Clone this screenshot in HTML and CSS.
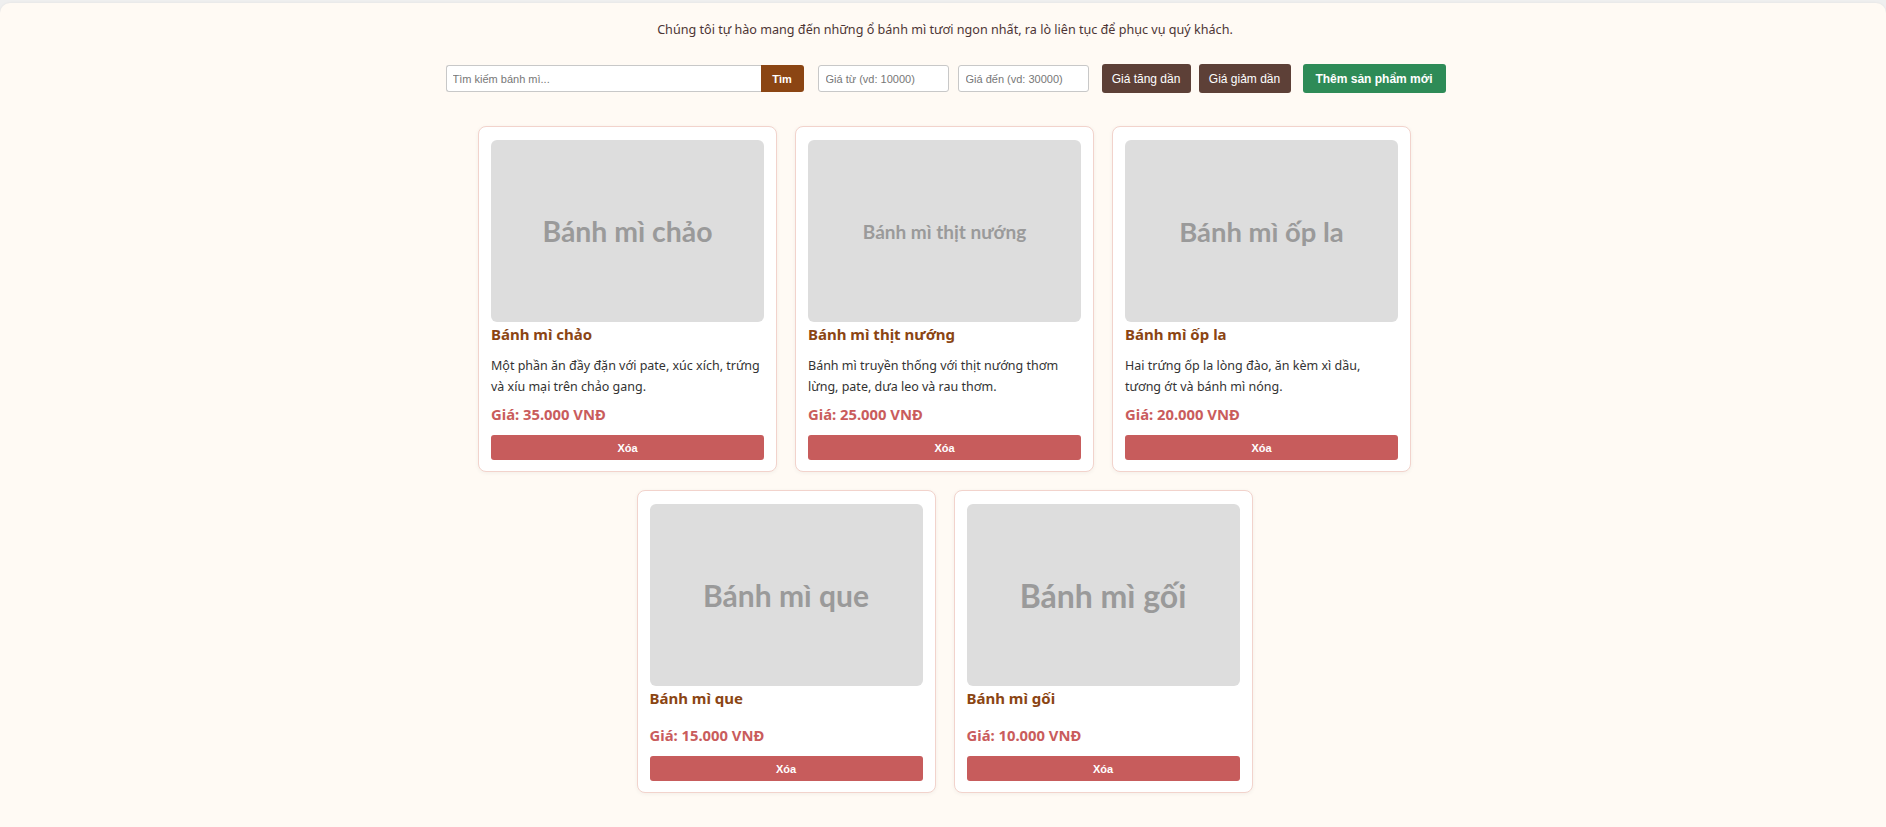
FILE: index.html
```html
<!DOCTYPE html>
<html lang="vi">
<head>
<meta charset="utf-8">
<title>Bánh mì</title>
<link rel="stylesheet" href="styles.css">
</head>
<body>
<div class="page">
  <p class="intro">Chúng tôi tự hào mang đến những ổ bánh mì tươi ngon nhất, ra lò liên tục để phục vụ quý khách.</p>
  <div class="toolbar">
    <div class="search">
      <input class="search-input" type="text" placeholder="Tìm kiếm bánh mì...">
      <button class="btn btn-search">Tìm</button>
    </div>
    <input class="price-input price-from" type="text" placeholder="Giá từ (vd: 10000)">
    <input class="price-input price-to" type="text" placeholder="Giá đến (vd: 30000)">
    <button class="btn btn-sort btn-asc">Giá tăng dần</button>
    <button class="btn btn-sort btn-desc">Giá giảm dần</button>
    <button class="btn btn-add">Thêm sản phẩm mới</button>
  </div>
  <div class="grid">
    <div class="card">
      <div class="thumb"><span class="t-chao">Bánh mì chảo</span></div>
      <h3 class="name">Bánh mì chảo</h3>
      <p class="desc">Một phần ăn đầy đặn với pate, xúc xích, trứng và xíu mại trên chảo gang.</p>
      <p class="price">Giá: 35.000 VNĐ</p>
      <button class="btn btn-del">Xóa</button>
    </div>
    <div class="card">
      <div class="thumb"><span class="t-nuong">Bánh mì thịt nướng</span></div>
      <h3 class="name">Bánh mì thịt nướng</h3>
      <p class="desc">Bánh mì truyền thống với thịt nướng thơm lừng, pate, dưa leo và rau thơm.</p>
      <p class="price">Giá: 25.000 VNĐ</p>
      <button class="btn btn-del">Xóa</button>
    </div>
    <div class="card">
      <div class="thumb"><span class="t-opla">Bánh mì ốp la</span></div>
      <h3 class="name">Bánh mì ốp la</h3>
      <p class="desc">Hai trứng ốp la lòng đào, ăn kèm xì dầu, tương ớt và bánh mì nóng.</p>
      <p class="price">Giá: 20.000 VNĐ</p>
      <button class="btn btn-del">Xóa</button>
    </div>
    <div class="card">
      <div class="thumb"><span class="t-que">Bánh mì que</span></div>
      <h3 class="name">Bánh mì que</h3>
      <p class="desc"></p>
      <p class="price">Giá: 15.000 VNĐ</p>
      <button class="btn btn-del">Xóa</button>
    </div>
    <div class="card">
      <div class="thumb"><span class="t-goi">Bánh mì gối</span></div>
      <h3 class="name">Bánh mì gối</h3>
      <p class="desc"></p>
      <p class="price">Giá: 10.000 VNĐ</p>
      <button class="btn btn-del">Xóa</button>
    </div>
  </div>
</div>
</body>
</html>
```

FILE: styles.css
```css
* { box-sizing: border-box; }

html, body {
  margin: 0;
  padding: 0;
}

body {
  background: #efefef;
  font-family: "Noto Sans", "Open Sans", sans-serif;
  color: #333;
  height: 827px;
  overflow: hidden;
}

.page {
  margin-top: 3px;
  background: #fffaf4;
  border-radius: 10px 10px 0 0;
  box-shadow: 0 0 3px rgba(0, 0, 0, 0.06);
  min-height: 824px;
  padding-top: 18px;
}

.intro {
  margin: 0;
  text-align: center;
  font-size: 12.6px;
  line-height: 18px;
  color: #4d3535;
  padding-left: 4px;
}

.toolbar {
  display: flex;
  justify-content: center;
  align-items: center;
  margin-top: 25px;
  height: 29px;
  padding-left: 5px;
  font-family: "Liberation Sans", Arial, sans-serif;
}

.search {
  display: flex;
  height: 27px;
}

.search-input {
  width: 315px;
  height: 27px;
  border: 1px solid #c8c8c8;
  border-right: none;
  border-radius: 3px 0 0 3px;
  padding: 0 6px;
  font-family: "Liberation Sans", Arial, sans-serif;
  font-size: 11px;
  background: #fff;
  outline: none;
}

.price-input {
  width: 131px;
  height: 27px;
  border: 1px solid #c8c8c8;
  border-radius: 3px;
  padding: 0 7px;
  font-family: "Liberation Sans", Arial, sans-serif;
  font-size: 11px;
  background: #fff;
  outline: none;
}

input::placeholder { color: #777; }

.price-from { margin-left: 14px; }
.price-to { margin-left: 9px; }

.btn {
  border: none;
  color: #fff;
  font-family: "Liberation Sans", Arial, sans-serif;
  cursor: pointer;
  padding: 0;
}

.btn-search {
  width: 43px;
  height: 27px;
  background: #8b4513;
  border-radius: 0 3px 3px 0;
  font-size: 11px;
  font-weight: bold;
}

.btn-sort {
  height: 29px;
  background: #5d4037;
  border-radius: 3px;
  font-size: 12px;
}

.btn-asc { width: 89px; margin-left: 13px; }
.btn-desc { width: 92px; margin-left: 8px; }

.btn-add {
  width: 143px;
  height: 29px;
  margin-left: 12px;
  background: #2e8b57;
  border-radius: 3px;
  font-size: 12px;
  font-weight: bold;
}

.grid {
  display: flex;
  flex-wrap: wrap;
  justify-content: center;
  column-gap: 18px;
  row-gap: 18px;
  width: 937px;
  margin: 33px auto 0;
  padding-left: 3px;
}

.card {
  width: 299px;
  background: #fff;
  border: 1px solid #f2d3cc;
  border-radius: 8px;
  box-shadow: 0 1px 4px rgba(0, 0, 0, 0.05);
  padding: 13px 12px 11px;
  display: flex;
  flex-direction: column;
}

.thumb {
  height: 182px;
  background: #dddddd;
  border-radius: 6px;
  display: flex;
  align-items: center;
  justify-content: center;
}

.thumb span {
  font-family: Lato, "Noto Sans", sans-serif;
  font-weight: 700;
  font-size: 28px;
  color: #9a9a9a;
}

.thumb .t-chao { font-size: 28.4px; }
.thumb .t-nuong { font-size: 19px; }
.thumb .t-opla { font-size: 27.4px; }
.thumb .t-que { font-size: 30px; }
.thumb .t-goi { font-size: 32px; }

.name {
  margin: 2px 0 0;
  font-size: 15px;
  line-height: 20px;
  font-weight: bold;
  color: #8b4513;
}

.desc {
  margin: 11px 0 0;
  font-size: 12.5px;
  line-height: 21px;
  color: #333;
}

.desc:empty { margin-top: 10px; }

.price {
  margin: 7px 0 0;
  font-size: 14.8px;
  line-height: 20px;
  font-weight: bold;
  color: #c95c5c;
}

.btn-del {
  margin-top: 11px;
  height: 25px;
  width: 100%;
  background: #c75c5c;
  border-radius: 3px;
  font-size: 11px;
  font-weight: bold;
}
```
